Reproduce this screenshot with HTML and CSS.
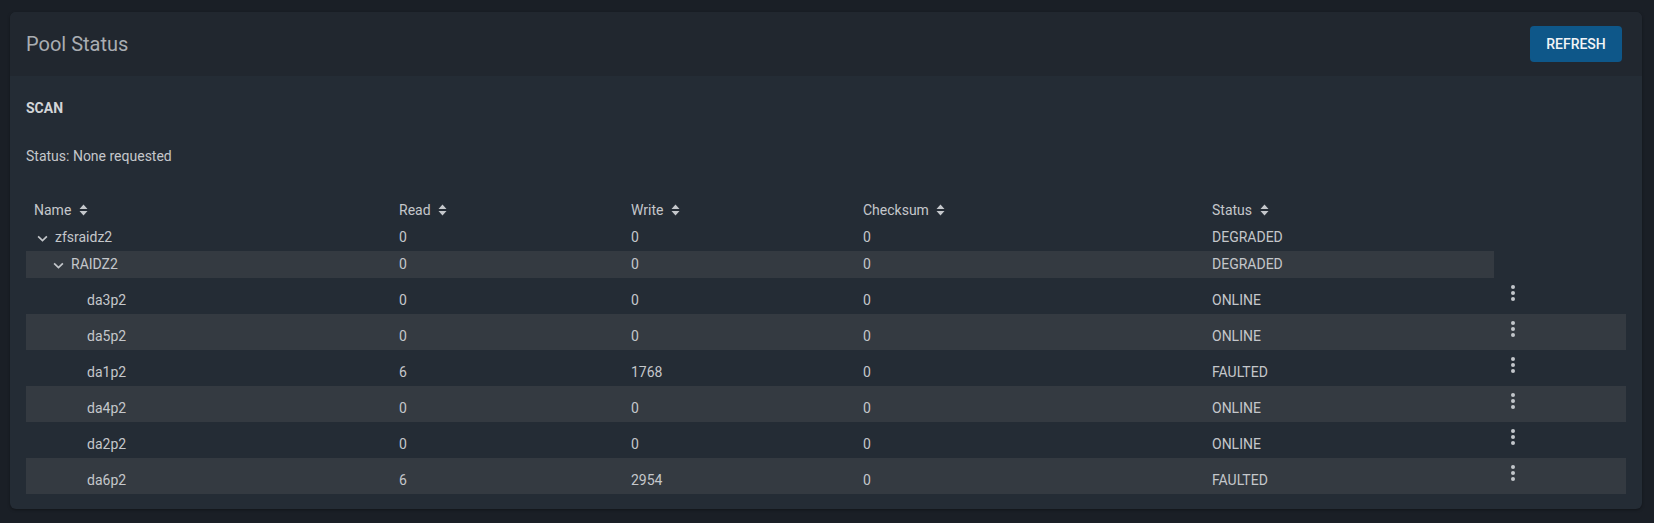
FILE: index.html
```html
<!DOCTYPE html>
<html lang="en">
<head>
  <meta charset="UTF-8" />
  <meta name="viewport" content="width=device-width, initial-scale=1.0"/>
  <title>Pool Status</title>
  <link rel="stylesheet" href="styles.css">
</head>
<body>

  <div class="card">
    <div class="card-header">
      <h3 class="card-title">Pool Status</h3>
      <button class="btn-refresh">Refresh</button>
    </div>

    <div class="card-body">
      <h4 class="scan-title">SCAN</h4>
      <p class="scan-status">Status: None requested</p>

      <table class="pool-table">
        <colgroup>
          <col class="col-name">
          <col class="col-read">
          <col class="col-write">
          <col class="col-checksum">
          <col class="col-status">
          <col class="col-action">
        </colgroup>
        <thead>
          <tr>
            <th>Name <svg class="sort-icon" viewBox="0 0 9 12"><path d="M4.5 0.5 L8.5 5 H0.5 Z M4.5 11.5 L0.5 7 H8.5 Z"/></svg></th>
            <th>Read <svg class="sort-icon" viewBox="0 0 9 12"><path d="M4.5 0.5 L8.5 5 H0.5 Z M4.5 11.5 L0.5 7 H8.5 Z"/></svg></th>
            <th>Write <svg class="sort-icon" viewBox="0 0 9 12"><path d="M4.5 0.5 L8.5 5 H0.5 Z M4.5 11.5 L0.5 7 H8.5 Z"/></svg></th>
            <th>Checksum <svg class="sort-icon" viewBox="0 0 9 12"><path d="M4.5 0.5 L8.5 5 H0.5 Z M4.5 11.5 L0.5 7 H8.5 Z"/></svg></th>
            <th>Status <svg class="sort-icon" viewBox="0 0 9 12"><path d="M4.5 0.5 L8.5 5 H0.5 Z M4.5 11.5 L0.5 7 H8.5 Z"/></svg></th>
          </tr>
        </thead>
        <tbody>
          <tr>
            <td><span class="toggler"><svg viewBox="0 0 12 8"><path d="M1 1.5 L6 6.5 L11 1.5"/></svg></span>zfsraidz2</td>
            <td>0</td><td>0</td><td>0</td><td>DEGRADED</td>
          </tr>
          <tr>
            <td><span class="indent"></span><span class="toggler"><svg viewBox="0 0 12 8"><path d="M1 1.5 L6 6.5 L11 1.5"/></svg></span>RAIDZ2</td>
            <td>0</td><td>0</td><td>0</td><td>DEGRADED</td>
          </tr>
          <tr class="leaf">
            <td><span class="indent"></span><span class="indent"></span><span class="toggler"></span>da3p2</td>
            <td>0</td><td>0</td><td>0</td><td>ONLINE</td>
            <td class="action"><button class="btn-menu"><svg viewBox="0 0 4 16"><circle cx="2" cy="2" r="2"/><circle cx="2" cy="8" r="2"/><circle cx="2" cy="14" r="2"/></svg></button></td>
          </tr>
          <tr class="leaf">
            <td><span class="indent"></span><span class="indent"></span><span class="toggler"></span>da5p2</td>
            <td>0</td><td>0</td><td>0</td><td>ONLINE</td>
            <td class="action"><button class="btn-menu"><svg viewBox="0 0 4 16"><circle cx="2" cy="2" r="2"/><circle cx="2" cy="8" r="2"/><circle cx="2" cy="14" r="2"/></svg></button></td>
          </tr>
          <tr class="leaf">
            <td><span class="indent"></span><span class="indent"></span><span class="toggler"></span>da1p2</td>
            <td>6</td><td>1768</td><td>0</td><td>FAULTED</td>
            <td class="action"><button class="btn-menu"><svg viewBox="0 0 4 16"><circle cx="2" cy="2" r="2"/><circle cx="2" cy="8" r="2"/><circle cx="2" cy="14" r="2"/></svg></button></td>
          </tr>
          <tr class="leaf">
            <td><span class="indent"></span><span class="indent"></span><span class="toggler"></span>da4p2</td>
            <td>0</td><td>0</td><td>0</td><td>ONLINE</td>
            <td class="action"><button class="btn-menu"><svg viewBox="0 0 4 16"><circle cx="2" cy="2" r="2"/><circle cx="2" cy="8" r="2"/><circle cx="2" cy="14" r="2"/></svg></button></td>
          </tr>
          <tr class="leaf">
            <td><span class="indent"></span><span class="indent"></span><span class="toggler"></span>da2p2</td>
            <td>0</td><td>0</td><td>0</td><td>ONLINE</td>
            <td class="action"><button class="btn-menu"><svg viewBox="0 0 4 16"><circle cx="2" cy="2" r="2"/><circle cx="2" cy="8" r="2"/><circle cx="2" cy="14" r="2"/></svg></button></td>
          </tr>
          <tr class="leaf">
            <td><span class="indent"></span><span class="indent"></span><span class="toggler"></span>da6p2</td>
            <td>6</td><td>2954</td><td>0</td><td>FAULTED</td>
            <td class="action"><button class="btn-menu"><svg viewBox="0 0 4 16"><circle cx="2" cy="2" r="2"/><circle cx="2" cy="8" r="2"/><circle cx="2" cy="14" r="2"/></svg></button></td>
          </tr>
        </tbody>
      </table>
    </div>
  </div>

</body>
</html>
```

FILE: styles.css
```css
* {
  margin: 0;
  padding: 0;
  box-sizing: border-box;
  font-family: Roboto, "Noto Sans", sans-serif;
}

body {
  background: #1a1f26;
  color: #c4c7cb;
  font-size: 14px;
  padding: 12px 12px 14px 10px;
}

.card {
  background: #242c35;
  border-radius: 6px;
  overflow: hidden;
  box-shadow: 0 1px 3px rgba(0, 0, 0, 0.35);
}

.card-header {
  display: flex;
  align-items: center;
  justify-content: space-between;
  height: 64px;
  padding: 0 20px 0 16px;
  background: #21272f;
}

.card-title {
  font-size: 20px;
  font-weight: 400;
  color: #a9adb2;
}

.btn-refresh {
  height: 36px;
  padding: 0 16px;
  min-width: 92px;
  border: none;
  border-radius: 4px;
  background: #0e5789;
  color: #f1f4f7;
  font-size: 14px;
  font-weight: 500;
  text-transform: uppercase;
  cursor: pointer;
}

.card-body {
  padding: 24px 16px 15px;
}

.scan-title {
  font-size: 14px;
  font-weight: 700;
  color: #d2d5d8;
}

.scan-status {
  margin-top: 32px;
}

.pool-table {
  margin-top: 33px;
  width: 100%;
  border-collapse: collapse;
  table-layout: fixed;
}

.col-name { width: 365px; }
.col-read { width: 232px; }
.col-write { width: 232px; }
.col-checksum { width: 349px; }
.col-status { width: 290px; }
.col-action { width: 132px; }

.pool-table th,
.pool-table td {
  padding: 5px 8px;
  line-height: 17px;
  text-align: left;
  font-weight: 400;
  vertical-align: bottom;
  white-space: nowrap;
}

.sort-icon {
  width: 9px;
  height: 12px;
  margin-left: 4px;
  vertical-align: -1px;
  fill: #c4c7cb;
}

.pool-table tbody tr:nth-child(even) td {
  background: #343a41;
}

.leaf {
  height: 36px;
}

.indent {
  display: inline-block;
  width: 16px;
}

.toggler {
  display: inline-flex;
  align-items: center;
  justify-content: center;
  width: 16px;
  height: 12px;
  margin-right: 5px;
  vertical-align: 0;
}

.toggler svg {
  width: 11px;
  height: 7px;
  fill: none;
  stroke: #c4c7cb;
  stroke-width: 1.9;
}

.pool-table td.action {
  vertical-align: top;
  padding: 3px 7px 0;
}

.btn-menu {
  display: flex;
  align-items: center;
  justify-content: center;
  width: 24px;
  height: 24px;
  border: none;
  background: none;
  cursor: pointer;
}

.btn-menu svg {
  width: 4px;
  height: 16px;
  fill: #c2c6ca;
}
```
